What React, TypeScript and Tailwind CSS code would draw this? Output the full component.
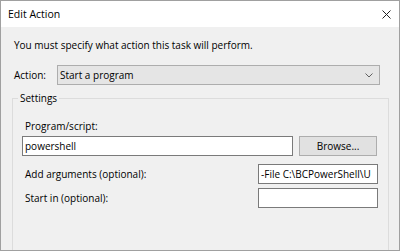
const Field = ({ value, className }: { value?: string; className: string }) => (
  <div
    className={`h-[20px] bg-white border border-[#7a7a7a] pl-[2px] flex items-center overflow-hidden whitespace-nowrap ${className}`}
  >
    {value}
  </div>
);

export default function App() {
  return (
    <div className="w-[400px] h-[251px] overflow-hidden border border-[#a0a0a0] bg-[#f0f0f0] flex flex-col text-[10px] leading-[14px] text-black font-['Open_Sans','Liberation_Sans',sans-serif]">
      {/* title bar */}
      <div className="h-[26px] shrink-0 bg-white flex items-center justify-between pl-[7px] pr-[8px]">
        <span className="text-[10.5px]">Edit Action</span>
        <svg width="9" height="9" viewBox="0 0 9 9" className="text-[#222]">
          <path d="M0.5 0.5 L8.5 8.5 M8.5 0.5 L0.5 8.5" stroke="currentColor" strokeWidth="1" />
        </svg>
      </div>

      <p className="mt-[11px] pl-[13px]">You must specify what action this task will perform.</p>
      <div className="mt-[8px] ml-[10px] mr-[11px] h-px bg-[#a0a0a0]" />

      {/* action row */}
      <div className="mt-[5px] pl-[13px] flex items-center">
        <span className="w-[43px]">Action:</span>
        <div className="w-[323px] h-[20px] bg-[#e5e5e5] border border-[#adadad] flex items-center justify-between pl-[2px] pr-[6px]">
          <span>Start a program</span>
          <svg width="8" height="5" viewBox="0 0 8 5" className="text-[#606060]">
            <path d="M0.5 0.5 L4 4 L7.5 0.5" fill="none" stroke="currentColor" strokeWidth="1" />
          </svg>
        </div>
      </div>

      {/* settings group */}
      <fieldset className="mt-[6px] ml-[11px] w-[377px] h-[200px] shrink-0 border border-[#dcdcdc] pl-[9px] pr-[10px]">
        <legend className="-ml-[4px] px-[2px]">Settings</legend>

        <p className="mt-[14px] pl-[3px]">Program/script:</p>
        <div className="mt-[3px] flex gap-[6px]">
          <Field value="powershell" className="w-[271px]" />
          <button className="w-[78px] h-[20px] bg-[#e1e1e1] border border-[#adadad]">Browse...</button>
        </div>

        <div className="mt-[8px] flex items-center justify-between">
          <span className="pl-[3px]">Add arguments (optional):</span>
          <Field value="-File C:\BCPowerShell\U" className="w-[120px]" />
        </div>
        <div className="mt-[4px] flex items-center justify-between">
          <span className="pl-[3px]">Start in (optional):</span>
          <Field className="w-[120px]" />
        </div>
      </fieldset>
    </div>
  );
}
